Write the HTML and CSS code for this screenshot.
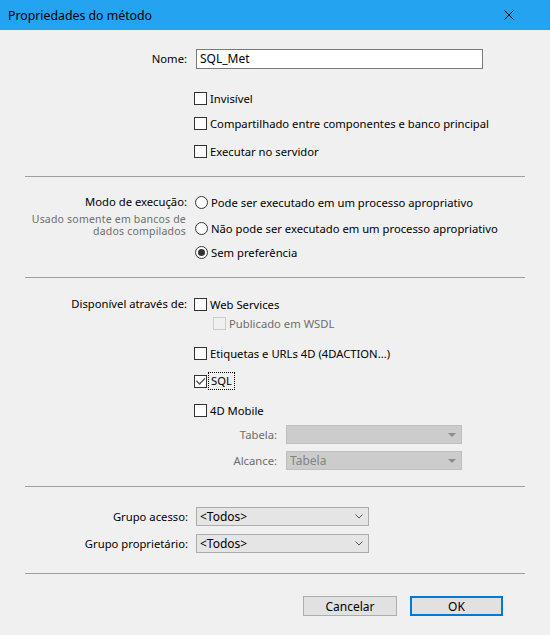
FILE: index.html
```html
<!DOCTYPE html>
<html lang="pt">
<head>
    <meta charset="UTF-8">
    <title>Propriedades do método</title>
    <link rel="stylesheet" href="styles.css">
</head>
<body>
    <div class="dialog">
        <div class="titlebar">
            <span class="title">Propriedades do método</span>
            <svg class="close" width="10" height="10" viewBox="0 0 10 10">
                <path d="M0.5 0.5 L9.5 9.5 M9.5 0.5 L0.5 9.5" stroke="#000" stroke-width="1"/>
            </svg>
        </div>

        <div class="content">
            <!-- name + flags -->
            <div class="group g-name">
                <div class="side">
                    <div class="lbl">Nome:</div>
                </div>
                <div class="main">
                    <div class="text-input">SQL_Met</div>
                    <div class="check mt-20"><span class="box"></span>Invisível</div>
                    <div class="check mt-7"><span class="box"></span>Compartilhado entre componentes e banco principal</div>
                    <div class="check mt-10"><span class="box"></span>Executar no servidor</div>
                </div>
            </div>

            <!-- execution mode -->
            <div class="group g-mode">
                <div class="side">
                    <div class="lbl">Modo de execução:</div>
                    <div class="note">
                        <div>Usado somente em bancos de</div>
                        <div>dados compilados</div>
                    </div>
                </div>
                <div class="main">
                    <div class="radio"><span class="dot"></span>Pode ser executado em um processo apropriativo</div>
                    <div class="radio mt-8"><span class="dot"></span>Não pode ser executado em um processo apropriativo</div>
                    <div class="radio mt-6"><span class="dot on"></span>Sem preferência</div>
                </div>
            </div>

            <!-- availability -->
            <div class="group g-avail">
                <div class="side">
                    <div class="lbl">Disponível através de:</div>
                </div>
                <div class="main">
                    <div class="check"><span class="box"></span>Web Services</div>
                    <div class="check sub disabled mt-1"><span class="box"></span>Publicado em WSDL</div>
                    <div class="check mt-12"><span class="box"></span>Etiquetas e URLs 4D (4DACTION...)</div>
                    <div class="check mt-10">
                        <span class="box">
                            <svg width="11" height="11" viewBox="0 0 11 11">
                                <path d="M1.3 4.7 L4.5 8 L10 2.3" fill="none" stroke="#555" stroke-width="1.3"/>
                            </svg>
                        </span>
                        <span class="focus">SQL</span>
                    </div>
                    <div class="check mt-11"><span class="box"></span>4D Mobile</div>
                    <div class="sub-row mt-6">
                        <span class="sub-lbl">Tabela:</span>
                        <div class="select disabled"><span></span><i class="tri"></i></div>
                    </div>
                    <div class="sub-row mt-7">
                        <span class="sub-lbl">Alcance:</span>
                        <div class="select disabled"><span>Tabela</span><i class="tri"></i></div>
                    </div>
                </div>
            </div>

            <!-- groups -->
            <div class="group g-groups">
                <div class="side">
                    <div class="lbl sel-lbl">Grupo acesso:</div>
                    <div class="lbl sel-lbl mt-8">Grupo proprietário:</div>
                </div>
                <div class="main">
                    <div class="select wide">
                        <span>&lt;Todos&gt;</span>
                        <svg class="chev" width="8" height="5" viewBox="0 0 8 5"><path d="M0.5 0.5 L4 4 L7.5 0.5" fill="none" stroke="#555" stroke-width="1"/></svg>
                    </div>
                    <div class="select wide mt-8">
                        <span>&lt;Todos&gt;</span>
                        <svg class="chev" width="8" height="5" viewBox="0 0 8 5"><path d="M0.5 0.5 L4 4 L7.5 0.5" fill="none" stroke="#555" stroke-width="1"/></svg>
                    </div>
                </div>
            </div>

            <div class="buttons">
                <button class="btn">Cancelar</button>
                <button class="btn primary">OK</button>
            </div>
        </div>
    </div>
</body>
</html>
```

FILE: styles.css
```css
body {
    margin: 0;
    padding: 0;
    background-color: #f0f0f0;
    font-family: "Noto Sans", "Open Sans", sans-serif;
    font-size: 11.25px;
    color: #000;
}
.dialog {
    width: 550px;
    height: 635px;
    background: #f0f0f0;
}
.titlebar {
    height: 30px;
    background: #24a4f0;
    display: flex;
    align-items: center;
    justify-content: space-between;
    padding: 0 36px 0 8px;
}
.title {
    font-size: 12.3px;
}
.content {
    padding: 0 25px;
}
.group {
    display: grid;
    grid-template-columns: 162px 1fr;
    column-gap: 7px;
    border-bottom: 1px solid #a0a0a0;
}
.g-name {
    padding: 19px 0 16px;
}
.g-mode {
    padding: 16px 0 16px;
}
.g-avail {
    padding: 17px 0 16px;
}
.g-groups {
    padding: 20px 0 20px;
}
.side {
    display: flex;
    flex-direction: column;
    align-items: flex-end;
    text-align: right;
}
.lbl {
    height: 18px;
    line-height: 18px;
    white-space: nowrap;
}
.g-name .lbl {
    height: 20px;
    line-height: 20px;
}
.sel-lbl {
    height: 19px;
    line-height: 19px;
    margin-right: -1px;
}
.note {
    margin-top: 3px;
    padding-right: 1px;
    font-size: 10.5px;
    line-height: 11.5px;
    color: #6d6d6d;
    letter-spacing: 0.2px;
}
.main {
    display: flex;
    flex-direction: column;
    align-items: flex-start;
}
.text-input {
    box-sizing: border-box;
    margin-left: 2px;
    width: 287px;
    height: 20px;
    line-height: 18px;
    padding: 0 3px;
    background: #fff;
    border: 1px solid #7a7a7a;
    font-size: 12px;
}
.check, .radio {
    height: 18px;
    display: flex;
    align-items: center;
    white-space: nowrap;
}
.box {
    box-sizing: border-box;
    width: 13px;
    height: 13px;
    margin-right: 3px;
    border: 1px solid #333;
    background: #fff;
    display: flex;
    align-items: center;
    justify-content: center;
}
.check.sub {
    margin-left: 19px;
}
.check.disabled {
    color: #6d6d6d;
}
.check.disabled .box {
    border-color: #cccccc;
    background: #f0f0f0;
}
.focus {
    outline: 1px dotted #000;
    outline-offset: 0;
    padding: 0 2px 1px 2px;
    margin-left: -1px;
}
.dot {
    box-sizing: border-box;
    width: 13px;
    height: 13px;
    margin-left: 1px;
    margin-right: 3px;
    border: 1px solid #333;
    border-radius: 50%;
    background: #fff;
    display: flex;
    align-items: center;
    justify-content: center;
}
.dot.on::after {
    content: "";
    width: 7px;
    height: 7px;
    border-radius: 50%;
    background: #333;
}
.sub-row {
    display: grid;
    grid-template-columns: 83px 176px;
    column-gap: 9px;
    align-items: center;
}
.sub-lbl {
    text-align: right;
    color: #6d6d6d;
}
.select {
    box-sizing: border-box;
    height: 19px;
    display: flex;
    align-items: center;
    justify-content: space-between;
    padding: 0 5px 0 3px;
    border: 1px solid #acacac;
    background: #e5e5e5;
    font-size: 12px;
}
.select.disabled {
    background: #cccccc;
    border-color: #bfbfbf;
    color: #838383;
}
.select.wide {
    margin-left: 2px;
    width: 173px;
}
.tri {
    width: 0;
    height: 0;
    border-left: 4px solid transparent;
    border-right: 4px solid transparent;
    border-top: 4px solid #8c8c8c;
}
.buttons {
    display: flex;
    justify-content: flex-end;
    gap: 13px;
    padding: 22px 22px 0 0;
}
.btn {
    box-sizing: border-box;
    width: 94px;
    height: 20px;
    padding: 0;
    border: 1px solid #adadad;
    background: #e1e1e1;
    font-family: inherit;
    font-size: 12px;
    color: #000;
}
.btn.primary {
    width: 93px;
    border: 2px solid #0078d7;
}
.mt-1 { margin-top: 1px; }
.mt-6 { margin-top: 6px; }
.mt-7 { margin-top: 7px; }
.mt-8 { margin-top: 8px; }
.mt-10 { margin-top: 10px; }
.mt-11 { margin-top: 11px; }
.mt-12 { margin-top: 12px; }
.mt-20 { margin-top: 20px; }
```
